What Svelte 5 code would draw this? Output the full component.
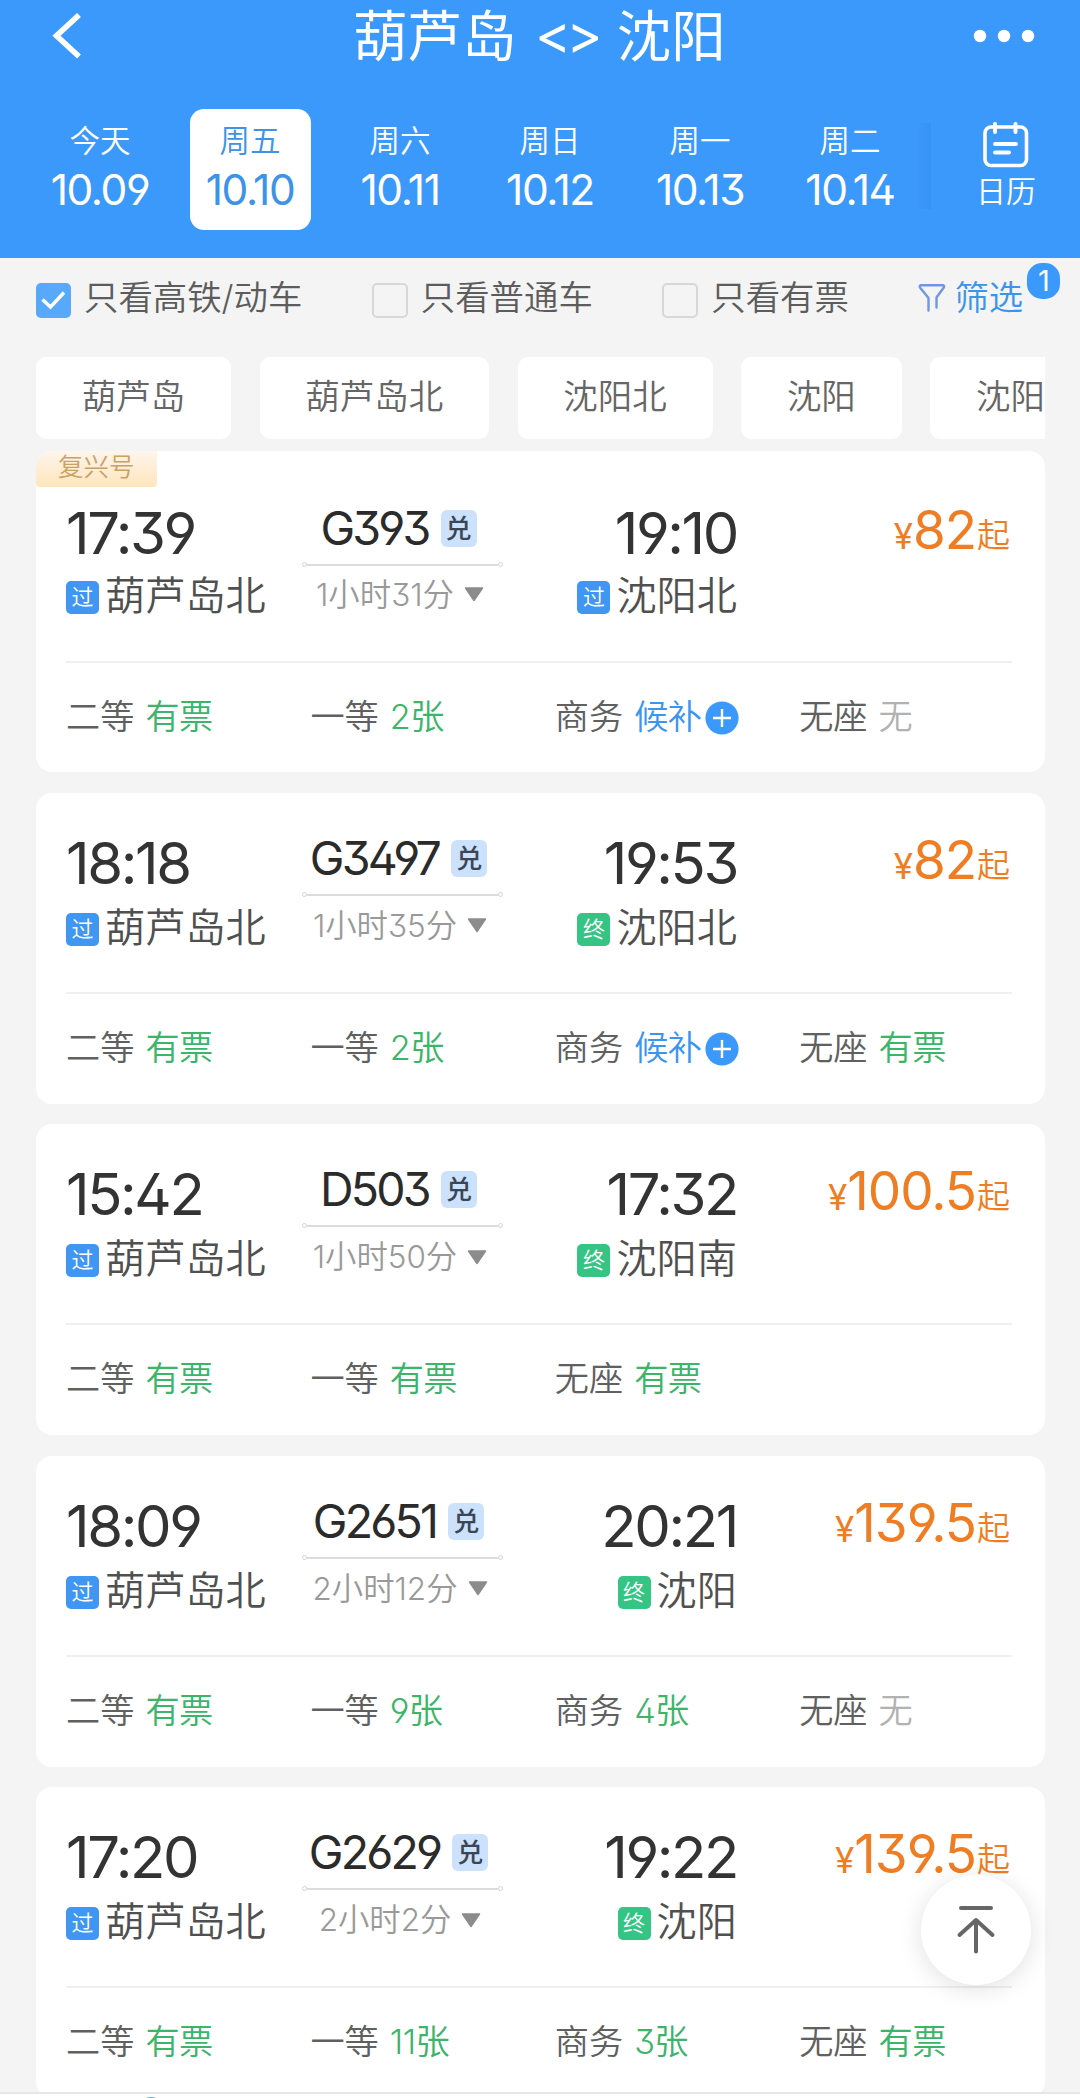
<script lang="ts">
  type Seat = { name: string; left: string; kind: 'ok' | 'wait' | 'none' };

  type Train = {
    no: string;
    tag?: string;
    depart: string;
    arrive: string;
    from: string;
    to: string;
    last: boolean;
    duration: string;
    price: string;
    seats: Seat[];
  };

  const days = [
    { week: '今天', date: '10.09' },
    { week: '周五', date: '10.10' },
    { week: '周六', date: '10.11' },
    { week: '周日', date: '10.12' },
    { week: '周一', date: '10.13' },
    { week: '周二', date: '10.14' },
  ];

  const stations = ['葫芦岛', '葫芦岛北', '沈阳北', '沈阳', '沈阳'];

  const trains: Train[] = [
    {
      no: 'G393', tag: '复兴号', depart: '17:39', arrive: '19:10',
      from: '葫芦岛北', to: '沈阳北', last: false, duration: '1小时31分', price: '82',
      seats: [
        { name: '二等', left: '有票', kind: 'ok' },
        { name: '一等', left: '2张', kind: 'ok' },
        { name: '商务', left: '候补', kind: 'wait' },
        { name: '无座', left: '无', kind: 'none' },
      ],
    },
    {
      no: 'G3497', depart: '18:18', arrive: '19:53',
      from: '葫芦岛北', to: '沈阳北', last: true, duration: '1小时35分', price: '82',
      seats: [
        { name: '二等', left: '有票', kind: 'ok' },
        { name: '一等', left: '2张', kind: 'ok' },
        { name: '商务', left: '候补', kind: 'wait' },
        { name: '无座', left: '有票', kind: 'ok' },
      ],
    },
    {
      no: 'D503', depart: '15:42', arrive: '17:32',
      from: '葫芦岛北', to: '沈阳南', last: true, duration: '1小时50分', price: '100.5',
      seats: [
        { name: '二等', left: '有票', kind: 'ok' },
        { name: '一等', left: '有票', kind: 'ok' },
        { name: '无座', left: '有票', kind: 'ok' },
      ],
    },
    {
      no: 'G2651', depart: '18:09', arrive: '20:21',
      from: '葫芦岛北', to: '沈阳', last: true, duration: '2小时12分', price: '139.5',
      seats: [
        { name: '二等', left: '有票', kind: 'ok' },
        { name: '一等', left: '9张', kind: 'ok' },
        { name: '商务', left: '4张', kind: 'ok' },
        { name: '无座', left: '无', kind: 'none' },
      ],
    },
    {
      no: 'G2629', depart: '17:20', arrive: '19:22',
      from: '葫芦岛北', to: '沈阳', last: true, duration: '2小时2分', price: '139.5',
      seats: [
        { name: '二等', left: '有票', kind: 'ok' },
        { name: '一等', left: '11张', kind: 'ok' },
        { name: '商务', left: '3张', kind: 'ok' },
        { name: '无座', left: '有票', kind: 'ok' },
      ],
    },
  ];

  let activeDay = 1;

  let filters = [
    { label: '只看高铁/动车', on: true },
    { label: '只看普通车', on: false },
    { label: '只看有票', on: false },
  ];

  function toggleFilter(index: number) {
    filters[index].on = !filters[index].on;
  }
</script>

<div class="page">
  <header class="header">
    <div class="nav">
      <svg class="back" width="32" height="46" viewBox="0 0 32 46">
        <path d="M28 2 L5.5 22.7 L28 43.5" fill="none" stroke="#fff" stroke-width="5.6" />
      </svg>
      <h1>葫芦岛 <span class="swap">&lt;&gt;</span> 沈阳</h1>
      <svg class="more" width="62" height="14" viewBox="0 0 62 14">
        <circle cx="7" cy="7" r="6.2" fill="#fff" />
        <circle cx="31" cy="7" r="6.2" fill="#fff" />
        <circle cx="55" cy="7" r="6.2" fill="#fff" />
      </svg>
    </div>

    <div class="days">
      {#each days as day, index (day.date)}
        <button class="day" class:active={index === activeDay} on:click={() => (activeDay = index)}>
          <span class="week">{day.week}</span>
          <span class="date">{day.date}</span>
        </button>
      {/each}
      <div class="calendar">
        <svg width="46" height="46" viewBox="0 0 46 46" fill="none" stroke="#fff" stroke-linecap="round">
          <rect x="2" y="5" width="41.5" height="38.5" rx="6" stroke-width="3.6" />
          <path d="M12 2 V10 M32.5 2 V10" stroke-width="4" />
          <path d="M12 22 H33 M12 30.5 H26" stroke-width="4" />
        </svg>
        <span>日历</span>
      </div>
    </div>
  </header>

  <div class="filters">
    {#each filters as filter, index}
      <button class="filter" on:click={() => toggleFilter(index)}>
        <span class="checkbox" class:checked={filter.on}>
          {#if filter.on}
            <svg width="35" height="35" viewBox="0 0 35 35">
              <path d="M6.5 16.5 L14.5 24 L28 9.5" fill="none" stroke="#fff" stroke-width="3.4" />
            </svg>
          {/if}
        </span>
        {filter.label}
      </button>
    {/each}
    <button class="sift">
      <svg width="28" height="30" viewBox="0 0 28 30" fill="none" stroke="#6f96e0" stroke-width="2.4" stroke-linejoin="round" stroke-linecap="round">
        <path d="M10.5 27.5 V15 L2 4.5 Q1.2 2.2 3.2 2.2 H24.5 Q26.8 2.2 25.8 4.5 L18.5 14.5 V24.5" />
      </svg>
      筛选
      <span class="count">1</span>
    </button>
  </div>

  <div class="stations">
    {#each stations as station}
      <button class="station-chip">{station}</button>
    {/each}
  </div>

  <main class="list">
    {#each trains as train (train.no)}
      <article class="card" class:tagged={train.tag}>
        {#if train.tag}
          <span class="tag">{train.tag}</span>
        {/if}
        <div class="trip">
          <div class="end">
            <div class="time">{train.depart}</div>
            <div class="place"><i class="mark">过</i>{train.from}</div>
          </div>
          <div class="middle">
            <div class="train-no">{train.no}<i class="points">兑</i></div>
            <div class="line"></div>
            <div class="duration">
              {train.duration}
              <svg width="20" height="15" viewBox="0 0 20 15">
                <path d="M1.5 1 H18.5 L10 13.5 Z" fill="#8c8c8c" stroke="#8c8c8c" stroke-width="1.5" stroke-linejoin="round" />
              </svg>
            </div>
          </div>
          <div class="end arrive">
            <div class="time">{train.arrive}</div>
            <div class="place">
              <i class="mark" class:last={train.last}>{train.last ? '终' : '过'}</i>{train.to}
            </div>
          </div>
          <div class="price"><small>¥</small>{train.price}<em>起</em></div>
        </div>
        <div class="seats">
          {#each train.seats as seat}
            <div class="seat">
              <span>{seat.name}</span>
              <span class={seat.kind}>{seat.left}</span>
              {#if seat.kind === 'wait'}
                <svg class="plus" width="34" height="34" viewBox="0 0 34 34">
                  <circle cx="17" cy="17" r="16.6" fill="#3b99fc" />
                  <path d="M17 8 V26 M8 17 H26" stroke="#fff" stroke-width="2.4" />
                </svg>
              {/if}
            </div>
          {/each}
        </div>
      </article>
    {/each}
  </main>

  <button class="to-top" aria-label="top">
    <svg width="42" height="52" viewBox="0 0 42 52" fill="none" stroke="#666" stroke-width="4" stroke-linecap="round" stroke-linejoin="round">
      <path d="M6 4 H36" />
      <path d="M4.5 31 L21 16 L37.5 31 M21 17 V47.5" />
    </svg>
  </button>

  <footer class="tabbar">
    <svg width="30" height="30" viewBox="0 0 30 30">
      <circle cx="15" cy="15" r="14" fill="#5aaee0" />
    </svg>
  </footer>
</div>

<style>
  :global(body) {
    background: #f4f4f4;
  }

  .page {
    position: relative;
    display: flex;
    flex-direction: column;
    width: 1080px;
    height: 2098px;
    overflow: hidden;
    background: #f4f4f4;
    color: #5c5c5c;
    font-family: Inter, "Noto Sans CJK SC", sans-serif;
    font-weight: 350;
    font-feature-settings: "cv03", "cv04", "cv09", "ss01";
  }

  button {
    padding: 0;
    border: none;
    background: none;
    color: inherit;
    font: inherit;
    cursor: pointer;
  }

  i,
  em {
    font-style: normal;
  }

  .header {
    flex-shrink: 0;
    height: 258px;
    background: #3b99fc;
    color: #fff;
  }

  .nav {
    display: flex;
    align-items: center;
    height: 71px;
    padding: 0 45px 0 51px;
  }

  .nav h1 {
    display: flex;
    gap: 18.5px;
    margin: 0 auto 0 270px;
    font-size: 54.5px;
    font-weight: 400;
    line-height: 70px;
  }

  .swap {
    line-height: 66px;
    letter-spacing: -4.5px;
  }

  .days {
    display: flex;
    height: 121px;
    padding: 38px 0 0 25px;
  }

  .day {
    display: flex;
    flex-direction: column;
    align-items: center;
    width: 121px;
    height: 121px;
    margin: 0 14.5px;
    padding-top: 14px;
    border-radius: 14px;
  }

  .day.active {
    background: #fff;
    color: #3d93e6;
  }

  .week {
    font-size: 30.5px;
    line-height: 36px;
  }

  .date {
    margin-top: 8px;
    font-size: 42.5px;
    font-weight: 400;
    line-height: 46px;
    letter-spacing: -1.4px;
  }

  .calendar {
    position: relative;
    flex: 1;
    display: flex;
    flex-direction: column;
    align-items: center;
    padding: 13px 0 0 7px;
    font-size: 30px;
  }

  .calendar::before {
    content: "";
    position: absolute;
    left: -8px;
    top: 14px;
    width: 14px;
    height: 86px;
    background: linear-gradient(to right, rgba(30, 110, 200, 0), rgba(30, 110, 200, 0.16));
  }

  .calendar span {
    margin-top: 4px;
    line-height: 38px;
  }

  .filters {
    flex-shrink: 0;
    display: flex;
    align-items: center;
    height: 85px;
    padding: 0 0 0 36px;
    font-size: 34.4px;
    line-height: 40px;
  }

  .filter {
    display: flex;
    align-items: center;
    gap: 13px;
    height: 40px;
    margin: -6px 69.5px 0 0;
    white-space: nowrap;
  }

  .checkbox {
    box-sizing: border-box;
    width: 36px;
    height: 35px;
    margin-top: 6px;
    border: 2px solid #d8d8d8;
    border-radius: 5px;
  }

  .checkbox.checked {
    width: 35px;
    border: none;
    background: #58a8fb;
  }

  .checkbox svg {
    display: block;
  }

  .sift {
    position: relative;
    display: flex;
    align-items: center;
    gap: 8px;
    margin-top: -6px;
    color: #3b93ea;
    white-space: nowrap;
  }

  .count {
    position: absolute;
    left: 109px;
    top: -15px;
    width: 33px;
    height: 36px;
    border-radius: 15px;
    background: #3b99fc;
    color: #fff;
    font-size: 29px;
    font-weight: 400;
    line-height: 36px;
    text-align: center;
  }

  .stations {
    flex-shrink: 0;
    display: flex;
    gap: 28.7px;
    height: 82px;
    margin: 14px 35px 11.5px 36px;
    overflow: hidden;
  }

  .station-chip {
    flex-shrink: 0;
    height: 82px;
    padding: 0 45.7px 3px;
    border-radius: 10px;
    background: #fff;
    color: #666;
    font-size: 34.5px;
    line-height: 78px;
  }

  .list {
    flex: 1;
    display: flex;
    flex-direction: column;
    gap: 20.6px;
    min-height: 0;
    overflow: hidden;
    padding: 0 35px 0 36px;
  }

  .card {
    flex-shrink: 0;
    position: relative;
    box-sizing: border-box;
    height: 311px;
    padding: 0 33px 0 30px;
    border-radius: 16px;
    background: #fff;
  }

  .card.tagged {
    height: 321.5px;
    padding-top: 12px;
  }

  .tag {
    position: absolute;
    left: 0;
    top: 0;
    box-sizing: border-box;
    width: 121px;
    height: 36px;
    padding-left: 22px;
    border-radius: 16px 0 4px 4px;
    background: linear-gradient(#fff5ec, #fee5bd);
    color: #c8a265;
    font-size: 25.5px;
    line-height: 32px;
  }

  .trip {
    display: grid;
    grid-template-columns: 237px 200px 234px 1fr;
    box-sizing: border-box;
    height: 201px;
    border-bottom: 2px solid #f0f0f0;
  }

  .tagged .trip {
    height: 200px;
  }

  .end {
    padding-top: 40px;
  }

  .time {
    color: #333;
    font-size: 58px;
    font-weight: 400;
    line-height: 60px;
    letter-spacing: -2.4px;
  }

  .place {
    display: flex;
    align-items: center;
    margin-top: 13px;
    color: #505050;
    font-size: 40.2px;
    line-height: 44px;
    white-space: nowrap;
  }

  .tagged .place {
    margin-top: 11px;
  }

  .arrive {
    display: flex;
    flex-direction: column;
    align-items: flex-end;
  }

  .mark {
    width: 33px;
    height: 33px;
    margin: 3px 6px 0 0;
    border-radius: 5px;
    background: #3f96f3;
    color: #fff;
    font-size: 22px;
    line-height: 33px;
    text-align: center;
  }

  .mark.last {
    background: #36c485;
  }

  .middle {
    display: flex;
    flex-direction: column;
    align-items: center;
    padding-top: 40px;
  }

  .train-no {
    display: flex;
    align-items: center;
    height: 50px;
    margin-right: 9px;
    color: #2b2b2b;
    font-size: 46.5px;
    font-weight: 370;
    line-height: 50px;
    letter-spacing: -2.8px;
  }

  .points {
    width: 36px;
    height: 37px;
    margin: 1px 0 0 12px;
    border-radius: 6px;
    background: #cce1fb;
    color: #3a4656;
    font-size: 26px;
    font-weight: 500;
    line-height: 37px;
    letter-spacing: 0;
    text-align: center;
  }

  .line {
    position: relative;
    width: 191px;
    height: 2px;
    margin: 11px 2px 0 0;
    background: #dcdcdc;
  }

  .line::before,
  .line::after {
    content: "";
    position: absolute;
    top: -2px;
    left: -5px;
    width: 3px;
    height: 3px;
    border: 1.5px solid #d4d4d4;
    border-radius: 50%;
  }

  .line::after {
    left: auto;
    right: -5px;
  }

  .duration {
    display: flex;
    align-items: center;
    gap: 10px;
    margin: 9px 6px 0 0;
    color: #999;
    font-size: 31.4px;
    line-height: 42px;
    white-space: nowrap;
  }

  .tagged .duration {
    margin-top: 8px;
  }

  .price {
    padding: 37px 2px 0 0;
    color: #ee7d24;
    font-size: 53px;
    font-weight: 400;
    line-height: 60px;
    letter-spacing: -1px;
    text-align: right;
    white-space: nowrap;
  }

  .price small {
    font-size: 35px;
    letter-spacing: 0;
  }

  .price em {
    margin-left: 1px;
    font-size: 33px;
    font-weight: 350;
    letter-spacing: 0;
    vertical-align: 2px;
  }

  .seats {
    display: grid;
    grid-template-columns: repeat(4, 244.4px);
    padding-top: 33px;
    font-size: 34.2px;
    line-height: 42px;
  }

  .seat {
    display: flex;
    align-items: center;
    white-space: nowrap;
    color: #606060;
  }

  .ok,
  .wait,
  .none {
    margin-left: 11px;
    color: #3cb46a;
    letter-spacing: -0.6px;
  }

  .wait {
    color: #3b95f0;
  }

  .none {
    color: #b2b2b2;
  }

  .plus {
    margin: 2px 0 0 4px;
  }

  .to-top {
    position: absolute;
    left: 921px;
    top: 1875px;
    display: flex;
    align-items: center;
    justify-content: center;
    width: 110px;
    height: 110px;
    border-radius: 50%;
    background: #fff;
    box-shadow: 0 4px 24px rgba(0, 0, 0, 0.12);
  }

  .tabbar {
    flex-shrink: 0;
    box-sizing: border-box;
    height: 6px;
    padding: 2px 0 0 136px;
    overflow: hidden;
    border-top: 2px solid #e6e6e6;
    background: #fff;
  }

  .tabbar svg {
    display: block;
  }
</style>
